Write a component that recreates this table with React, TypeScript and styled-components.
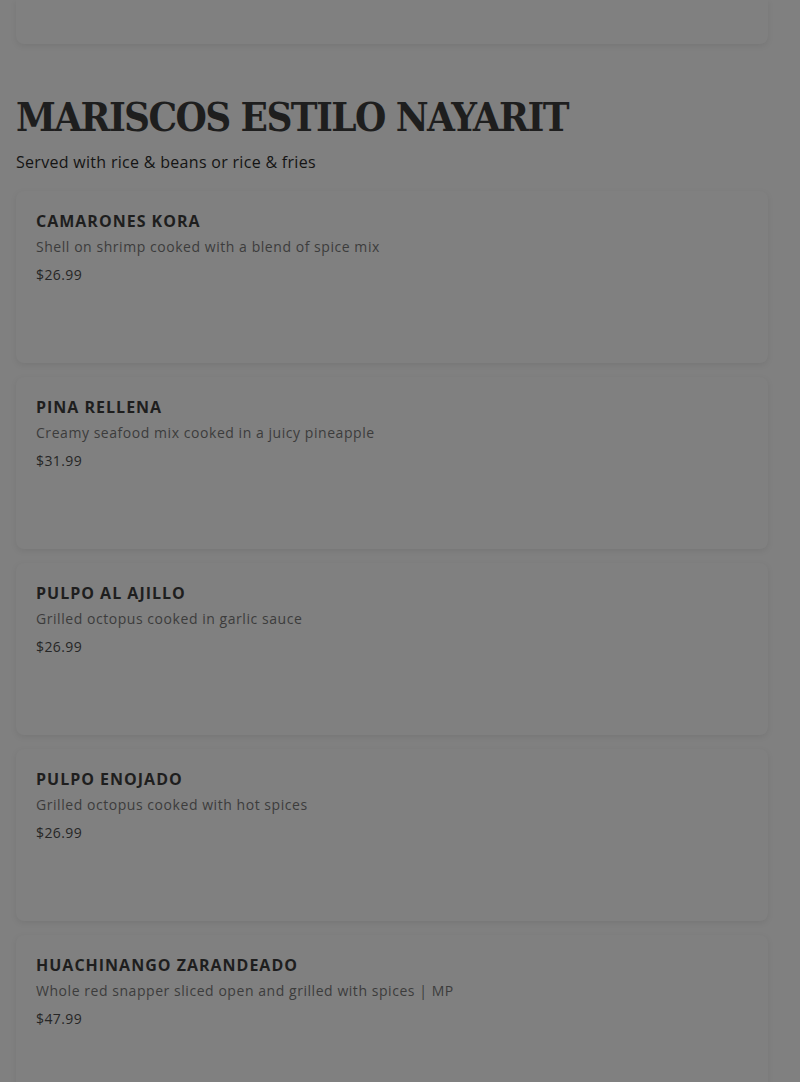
import styled, { createGlobalStyle } from 'styled-components';

type Item = {
  name: string;
  description: string;
  price: string;
};

const ITEMS: Item[] = [
  {
    name: 'Camarones Kora',
    description: 'Shell on shrimp cooked with a blend of spice mix',
    price: '$26.99',
  },
  {
    name: 'Pina Rellena',
    description: 'Creamy seafood mix cooked in a juicy pineapple',
    price: '$31.99',
  },
  {
    name: 'Pulpo al Ajillo',
    description: 'Grilled octopus cooked in garlic sauce',
    price: '$26.99',
  },
  {
    name: 'Pulpo Enojado',
    description: 'Grilled octopus cooked with hot spices',
    price: '$26.99',
  },
  {
    name: 'Huachinango Zarandeado',
    description: 'Whole red snapper sliced open and grilled with spices | MP',
    price: '$47.99',
  },
];

const GlobalStyle = createGlobalStyle`
  html, body {
    margin: 0;
    padding: 0;
    background: #808080;
    overflow: hidden;
  }
  body {
    font-family: 'Open Sans', 'Liberation Sans', sans-serif;
  }
`;

const App = () => {
  return (
    <>
      <GlobalStyle />
      <Page>
        <PrevCard />
        <Section>
          <SectionTitle>Mariscos Estilo Nayarit</SectionTitle>
          <SectionNote>Served with rice &amp; beans or rice &amp; fries</SectionNote>
          <ItemList>
            {ITEMS.map((item) => (
              <Card key={item.name}>
                <ItemName>{item.name}</ItemName>
                <ItemDesc>{item.description}</ItemDesc>
                <ItemPrice>{item.price}</ItemPrice>
              </Card>
            ))}
          </ItemList>
        </Section>
      </Page>
    </>
  );
};

export default App;

const Page = styled.div`
  padding: 0 32px 0 16px;
  height: 1082px;
  overflow: hidden;
`;

const PrevCard = styled.div`
  height: 44px;
  border-radius: 0 0 8px 8px;
  background: #808080;
  box-shadow: 0 2px 6px rgba(0, 0, 0, 0.08);
`;

const Section = styled.div`
  padding-top: 50px;
`;

const SectionTitle = styled.h2`
  margin: 0;
  font-family: 'DejaVu Serif Condensed', 'DejaVu Serif', serif;
  font-weight: 700;
  font-size: 40px;
  line-height: 46px;
  letter-spacing: -1.6px;
  text-transform: uppercase;
  color: #1e1e1e;
`;

const SectionNote = styled.p`
  margin: 10px 0 0;
  font-size: 16px;
  line-height: 24px;
  letter-spacing: 0.3px;
  color: #141414;
`;

const ItemList = styled.div`
  display: flex;
  flex-direction: column;
  gap: 14px;
  margin-top: 17px;
`;

const Card = styled.div`
  min-height: 172px;
  box-sizing: border-box;
  padding: 20px;
  border-radius: 8px;
  background: #808080;
  box-shadow: 0 2px 6px rgba(0, 0, 0, 0.08);
`;

const ItemName = styled.h3`
  margin: 0;
  font-size: 16px;
  line-height: 20px;
  font-weight: 700;
  letter-spacing: 1px;
  text-transform: uppercase;
  color: #1e1e1e;
`;

const ItemDesc = styled.p`
  margin: 6px 0 0;
  font-size: 14px;
  line-height: 20px;
  letter-spacing: 0.55px;
  color: #3c3c3c;
`;

const ItemPrice = styled.p`
  margin: 8px 0 0;
  font-size: 14px;
  line-height: 20px;
  letter-spacing: 0.4px;
  color: #262626;
`;
